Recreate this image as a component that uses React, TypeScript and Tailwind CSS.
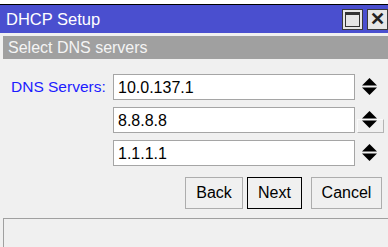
import React from "react";

const servers = ["10.0.137.1", "8.8.8.8", "1.1.1.1"];

function Spinner({ hover }: { hover?: boolean }) {
  return (
    <div className="relative ml-[7px] flex h-[26px] w-[15px] items-center">
      {hover && (
        <div className="absolute left-[-5px] top-[12px] h-[14px] w-[27px] border border-[#b4b4b4] border-t-[#fafafa] border-l-[#fafafa]" />
      )}
      <svg width="15" height="18" viewBox="0 0 15 18" className="relative">
        <polygon points="7.5,0 15,7.5 0,7.5" fill="#000" />
        <polygon points="0,9.5 15,9.5 7.5,17" fill="#000" />
      </svg>
    </div>
  );
}

export default function App() {
  return (
    <div className="flex h-[247px] w-[388px] flex-col overflow-hidden bg-[#f0f0f0] font-['Liberation_Sans',Arial,sans-serif] text-[16px] text-black">
      <div className="h-[4px] bg-white" />
      <div className="h-px bg-black" />
      <div className="flex h-[28px] items-center bg-[#4a4fcf] pl-[6px]">
        <span className="flex-1 text-[16.5px] text-white">DHCP Setup</span>
        <div className="flex h-[21px] w-[21px] items-center justify-center border border-[#3a3a3a] bg-[#e6e6e6]">
          <div className="h-[15px] w-[15px] border border-t-[3px] border-[#333]" />
        </div>
        <div className="ml-[4px] flex h-[21px] w-[21px] shrink-0 items-center justify-center border border-[#3a3a3a] bg-[#e6e6e6] text-[18px] font-bold leading-none text-[#222]">
          ✕
        </div>
      </div>
      <div className="h-[3px]" />
      <div className="ml-[3px] flex h-[23px] items-center bg-[#a0a0a0] pl-[5px] text-[16px] text-[#f4f4f4]">
        Select DNS servers
      </div>

      <div className="mt-[15px] flex flex-col gap-[7px]">
        {servers.map((s, i) => (
          <div key={s} className="flex items-center">
            <div className="w-[113px] pl-[11px] text-[15.5px] text-[#1c1cff]">
              {i === 0 ? "DNS Servers:" : ""}
            </div>
            <div className="flex h-[26px] w-[242px] items-center border border-[#a5a5a5] bg-white pl-[4px] pt-px">
              {s}
            </div>
            <Spinner hover={i === 1} />
          </div>
        ))}
      </div>

      <div className="mt-[11px] flex justify-end pr-[6px]">
        <button className="flex h-[32px] w-[58px] items-center justify-center border border-[#adadad] bg-[#f0f0f0]">
          Back
        </button>
        <button className="ml-[4px] flex h-[32px] w-[55px] items-center justify-center border border-black bg-[#f0f0f0]">
          Next
        </button>
        <button className="ml-[9px] flex h-[32px] w-[71px] items-center justify-center border border-[#adadad] bg-[#f0f0f0]">
          Cancel
        </button>
      </div>

      <div className="ml-[3px] mt-[9px] flex-1 border-l border-t border-[#a0a0a0]" />
    </div>
  );
}
